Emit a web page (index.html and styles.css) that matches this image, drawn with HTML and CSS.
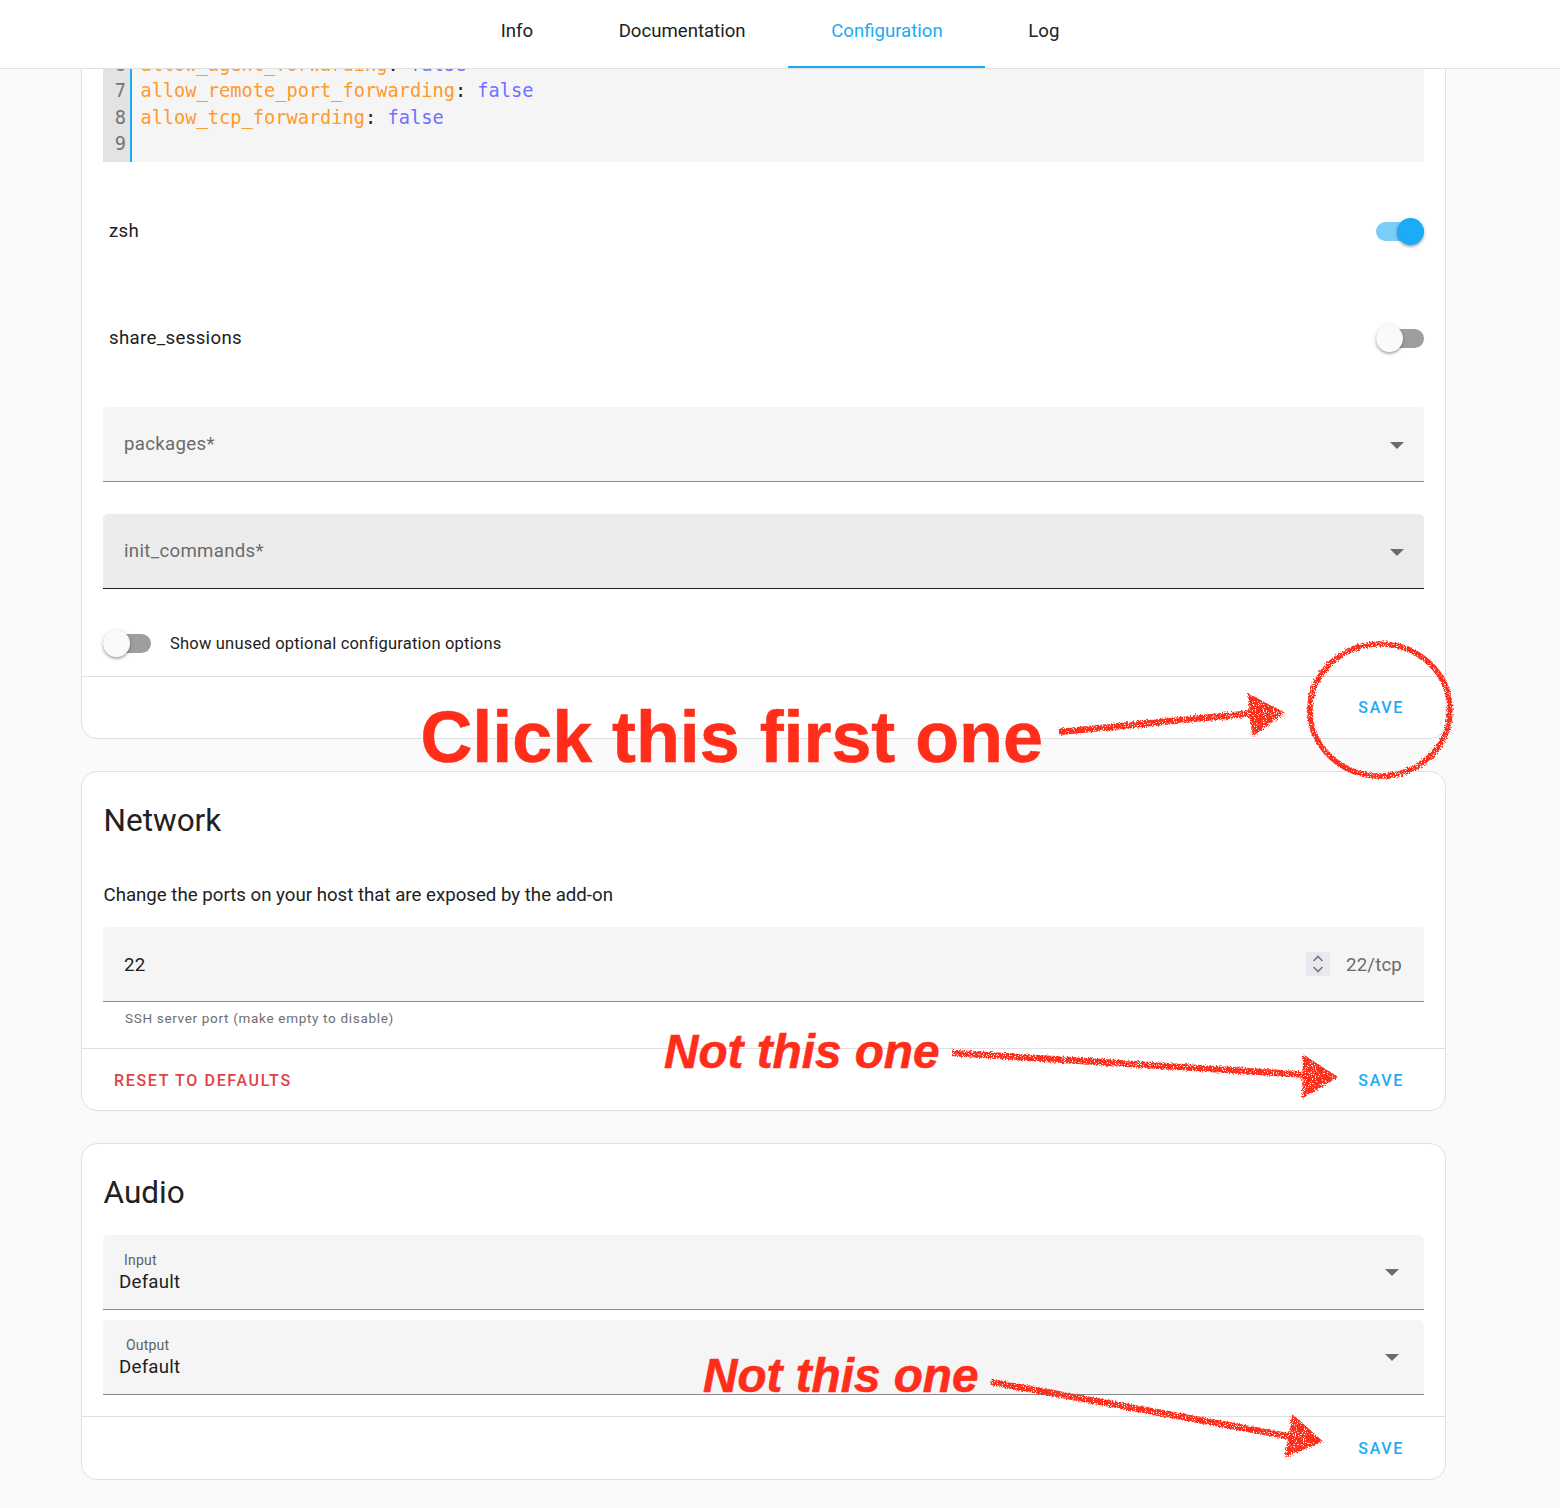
FILE: index.html
```html
<!DOCTYPE html>
<html lang="en">
<head>
<meta charset="utf-8">
<title>SSH add-on configuration</title>
<link rel="stylesheet" href="styles.css">
</head>
<body>
<header class="tabs">
  <a class="tab">Info</a>
  <a class="tab">Documentation</a>
  <a class="tab tab-active">Configuration</a>
  <a class="tab">Log</a>
</header>
<main class="page">
  <section class="card card-options">
    <div class="code">
      <div class="gutter"><span>6</span><span>7</span><span>8</span><span>9</span></div>
      <div class="lines">
        <div class="line"><span class="key">allow_agent_forwarding</span>: <span class="val">false</span></div>
        <div class="line"><span class="key">allow_remote_port_forwarding</span>: <span class="val">false</span></div>
        <div class="line"><span class="key">allow_tcp_forwarding</span>: <span class="val">false</span></div>
        <div class="line">&nbsp;</div>
      </div>
    </div>
    <div class="option option-first"><span>zsh</span><span class="switch switch-on"></span></div>
    <div class="option"><span>share_sessions</span><span class="switch"></span></div>
    <div class="field field-first"><span class="placeholder">packages*</span><span class="caret"></span></div>
    <div class="field field-hover"><span class="placeholder">init_commands*</span><span class="caret"></span></div>
    <div class="unused"><span class="switch"></span><span class="unused-label">Show unused optional configuration options</span></div>
    <div class="actions actions-end"><button class="btn btn-save">SAVE</button></div>
  </section>

  <section class="card">
    <h2 class="card-title">Network</h2>
    <p class="card-desc">Change the ports on your host that are exposed by the add-on</p>
    <div class="field field-net">
      <span class="value">22</span>
      <span class="spinner">
        <svg width="12" height="20" viewBox="0 0 12 20" fill="none" stroke="#77777f" stroke-width="1.6"><path d="M1.5 7 6 2.5 10.5 7"/><path d="M1.5 13 6 17.5 10.5 13"/></svg>
      </span>
      <span class="suffix">22/tcp</span>
    </div>
    <div class="helper">SSH server port (make empty to disable)</div>
    <div class="actions actions-net"><button class="btn btn-reset">RESET TO DEFAULTS</button><button class="btn btn-save">SAVE</button></div>
  </section>

  <section class="card">
    <h2 class="card-title card-title-audio">Audio</h2>
    <div class="field field-select">
      <span class="select-text"><span class="select-label">Input</span><span class="select-value">Default</span></span>
      <span class="caret caret-audio"></span>
    </div>
    <div class="field field-select field-output">
      <span class="select-text"><span class="select-label select-label-output">Output</span><span class="select-value">Default</span></span>
      <span class="caret caret-audio"></span>
    </div>
    <div class="actions actions-end actions-audio"><button class="btn btn-save">SAVE</button></div>
  </section>
</main>

<div class="notes">
  <span class="note note-first">Click this first one</span>
  <span class="note-alt note-net">Not this one</span>
  <span class="note-alt note-audio">Not this one</span>
  <svg class="scribble" width="1560" height="1508" viewBox="0 0 1560 1508" fill="none" stroke="#ff2d1a">
    <defs>
      <filter id="rough" x="-5%" y="-5%" width="110%" height="110%">
        <feTurbulence type="fractalNoise" baseFrequency="0.6" numOctaves="2" seed="4" result="wobble"/>
        <feDisplacementMap in="SourceGraphic" in2="wobble" scale="4.5" result="moved"/>
        <feTurbulence type="fractalNoise" baseFrequency="0.9" numOctaves="1" seed="9"/>
        <feColorMatrix type="matrix" values="0 0 0 0 0  0 0 0 0 0  0 0 0 0 0  0 0 0 -9 6.2" result="speck"/>
        <feComposite in="moved" in2="speck" operator="in"/>
        <feGaussianBlur stdDeviation="0.35"/>
      </filter>
    </defs>
    <g filter="url(#rough)">
      <ellipse cx="1380" cy="710" rx="70" ry="66" stroke-width="5.5"/>
      <path d="M1059 732 1255 713" stroke-width="6.5"/>
      <path d="M1249 695 1283 713 1253 735Z" fill="#ff2d1a" stroke-width="2"/>
      <path d="M952 1053 1310 1075" stroke-width="6.5"/>
      <path d="M1304 1056 1336 1077 1303 1097Z" fill="#ff2d1a" stroke-width="2"/>
      <path d="M991 1382 1298 1438" stroke-width="6.5"/>
      <path d="M1293 1416 1321 1441 1286 1456Z" fill="#ff2d1a" stroke-width="2"/>
    </g>
  </svg>
</div>
</body>
</html>
```
FILE: styles.css
```css
* { box-sizing: border-box; }
html, body { margin: 0; padding: 0; }
body {
  position: relative;
  width: 1560px;
  height: 1508px;
  overflow: hidden;
  background: #fafafa;
  color: #212121;
  font-family: Roboto, "Liberation Sans", sans-serif;
  font-size: 18.67px;
}

.tabs {
  position: absolute;
  top: 0;
  left: 0;
  z-index: 2;
  width: 100%;
  height: 69px;
  display: flex;
  justify-content: center;
  background: #fff;
  border-bottom: 1px solid #e0e0e0;
}
.tab {
  height: 68px;
  padding: 0 42.8px 6px;
  display: flex;
  align-items: center;
  font-size: 18.6px;
}
.tab-active {
  color: #1cabf6;
  border-bottom: 2px solid #1cabf6;
  padding-bottom: 4px;
}

.page {
  width: 1365px;
  margin-left: 81px;
  padding-top: 40px;
  display: flex;
  flex-direction: column;
  gap: 32px;
}
.card {
  background: #fff;
  border: 1px solid #e0e0e0;
  border-radius: 16px;
}
.card-options { padding-top: 10px; }

.code {
  margin: 0 21px;
  display: flex;
  height: 111px;
  background: #f5f5f5;
  font-family: "DejaVu Sans Mono", monospace;
  font-size: 18.67px;
  line-height: 26.5px;
}
.gutter {
  width: 29px;
  padding: 0.5px 4px 0 0;
  display: flex;
  flex-direction: column;
  align-items: flex-end;
  background: #e3e3e3;
  border-right: 2px solid #1cabf6;
  color: #757575;
}
.lines { padding: 0.5px 0 0 8px; }
.line { transform: translateX(0.4px); }
.key { color: #ff9a2e; }
.val { color: #6c72ff; }

.option {
  height: 107px;
  margin: 0 21px;
  padding-left: 6px;
  display: flex;
  align-items: center;
  justify-content: space-between;
  letter-spacing: 0.33px;
}
.option-first { margin-top: 15px; }
.option .switch { margin-top: 1px; }

.switch {
  position: relative;
  flex: none;
  width: 48px;
  height: 19px;
  border-radius: 10px;
  background: #9e9e9e;
}
.switch::after {
  content: "";
  position: absolute;
  left: 0;
  top: -4px;
  width: 27px;
  height: 27px;
  border-radius: 50%;
  background: #fafafa;
  box-shadow: 0 2px 2px rgba(0, 0, 0, 0.22), 0 1px 5px rgba(0, 0, 0, 0.16);
}
.switch-on { background: #7bcefa; }
.switch-on::after { left: 21px; background: #1cabf6; }

.field {
  height: 75px;
  margin: 0 21px;
  padding: 0 20px 0 21px;
  display: flex;
  align-items: center;
  justify-content: space-between;
  background: #f5f5f5;
  border-bottom: 1px solid #8a8a8a;
  border-radius: 5px 5px 0 0;
  letter-spacing: 0.3px;
}
.field-first { margin-top: 16px; }
.field-hover {
  margin-top: 32px;
  background: #ececec;
  border-bottom-color: #212121;
}
.placeholder { color: #6b6b6b; }
.caret {
  width: 0;
  height: 0;
  margin-top: 2px;
  border-left: 7px solid transparent;
  border-right: 7px solid transparent;
  border-top: 7px solid #6b6b6b;
}

.unused {
  height: 66px;
  margin: 21px 21px 0;
  display: flex;
  align-items: center;
  gap: 19px;
}
.unused-label { font-size: 16.5px; letter-spacing: 0.2px; }

.actions {
  height: 62px;
  padding: 0 41px 0 11px;
  display: flex;
  align-items: center;
  justify-content: space-between;
  border-top: 1px solid #e0e0e0;
}
.actions-end { justify-content: flex-end; }
.actions-net { padding-top: 2px; }
.actions-audio { margin-top: 21px; height: 63px; }
.btn {
  padding: 0 0 0 3px;
  height: 36px;
  border: 0;
  background: none;
  font-family: Roboto, "Liberation Sans", sans-serif;
  font-size: 16px;
  font-weight: 500;
  letter-spacing: 1.67px;
}
.btn-save { color: #1cabf6; }
.btn-reset { color: #e04343; padding-left: 21px; }

.card-title {
  margin: 0;
  padding: 29px 21.5px 0;
  height: 97px;
  font-size: 31.5px;
  font-weight: 400;
  line-height: 40px;
}
.card-title-audio { height: 91px; }
.card-desc {
  margin: 0 21.5px;
  height: 58px;
  padding-top: 14px;
  line-height: 24px;
}
.field-net { padding: 2px 22px 0 21px; }
.value { flex: 1; letter-spacing: 0.3px; }
.spinner {
  width: 24px;
  height: 24px;
  margin: -2px 16px 0 0;
  display: flex;
  align-items: center;
  justify-content: center;
  background: #e8e8ee;
}
.suffix { color: #6b6b6b; letter-spacing: 0.15px; }
.helper {
  height: 46px;
  padding: 6px 0 0 43px;
  color: #6e6e6e;
  font-size: 13.5px;
  letter-spacing: 0.68px;
  line-height: 20px;
}

.field-select { padding: 0 25px 1px 16px; }
.field-output { margin-top: 10px; }
.select-text { display: flex; flex-direction: column; }
.select-label {
  padding-left: 5px;
  color: #616161;
  font-size: 14px;
  letter-spacing: 0.2px;
  line-height: 20px;
}
.select-label-output { padding-left: 7px; }
.select-value { margin-top: 1px; line-height: 22px; letter-spacing: 0.25px; }

.notes {
  position: absolute;
  top: 0;
  left: 0;
  z-index: 3;
  width: 1560px;
  height: 1508px;
  pointer-events: none;
  font-family: "Liberation Sans", Arial, sans-serif;
  color: #ff2d1a;
}
.scribble { position: absolute; top: 0; left: 0; }
.note, .note-alt {
  position: absolute;
  font-weight: 700;
  white-space: nowrap;
  line-height: 1;
  -webkit-text-stroke: 0.6px #ff2d1a;
}
.note { left: 420.5px; top: 702px; font-size: 71.8px; }
.note-alt { font-style: italic; font-size: 47.7px; }
.note-net { left: 664px; top: 1028px; }
.note-audio { left: 703px; top: 1352px; }
```
